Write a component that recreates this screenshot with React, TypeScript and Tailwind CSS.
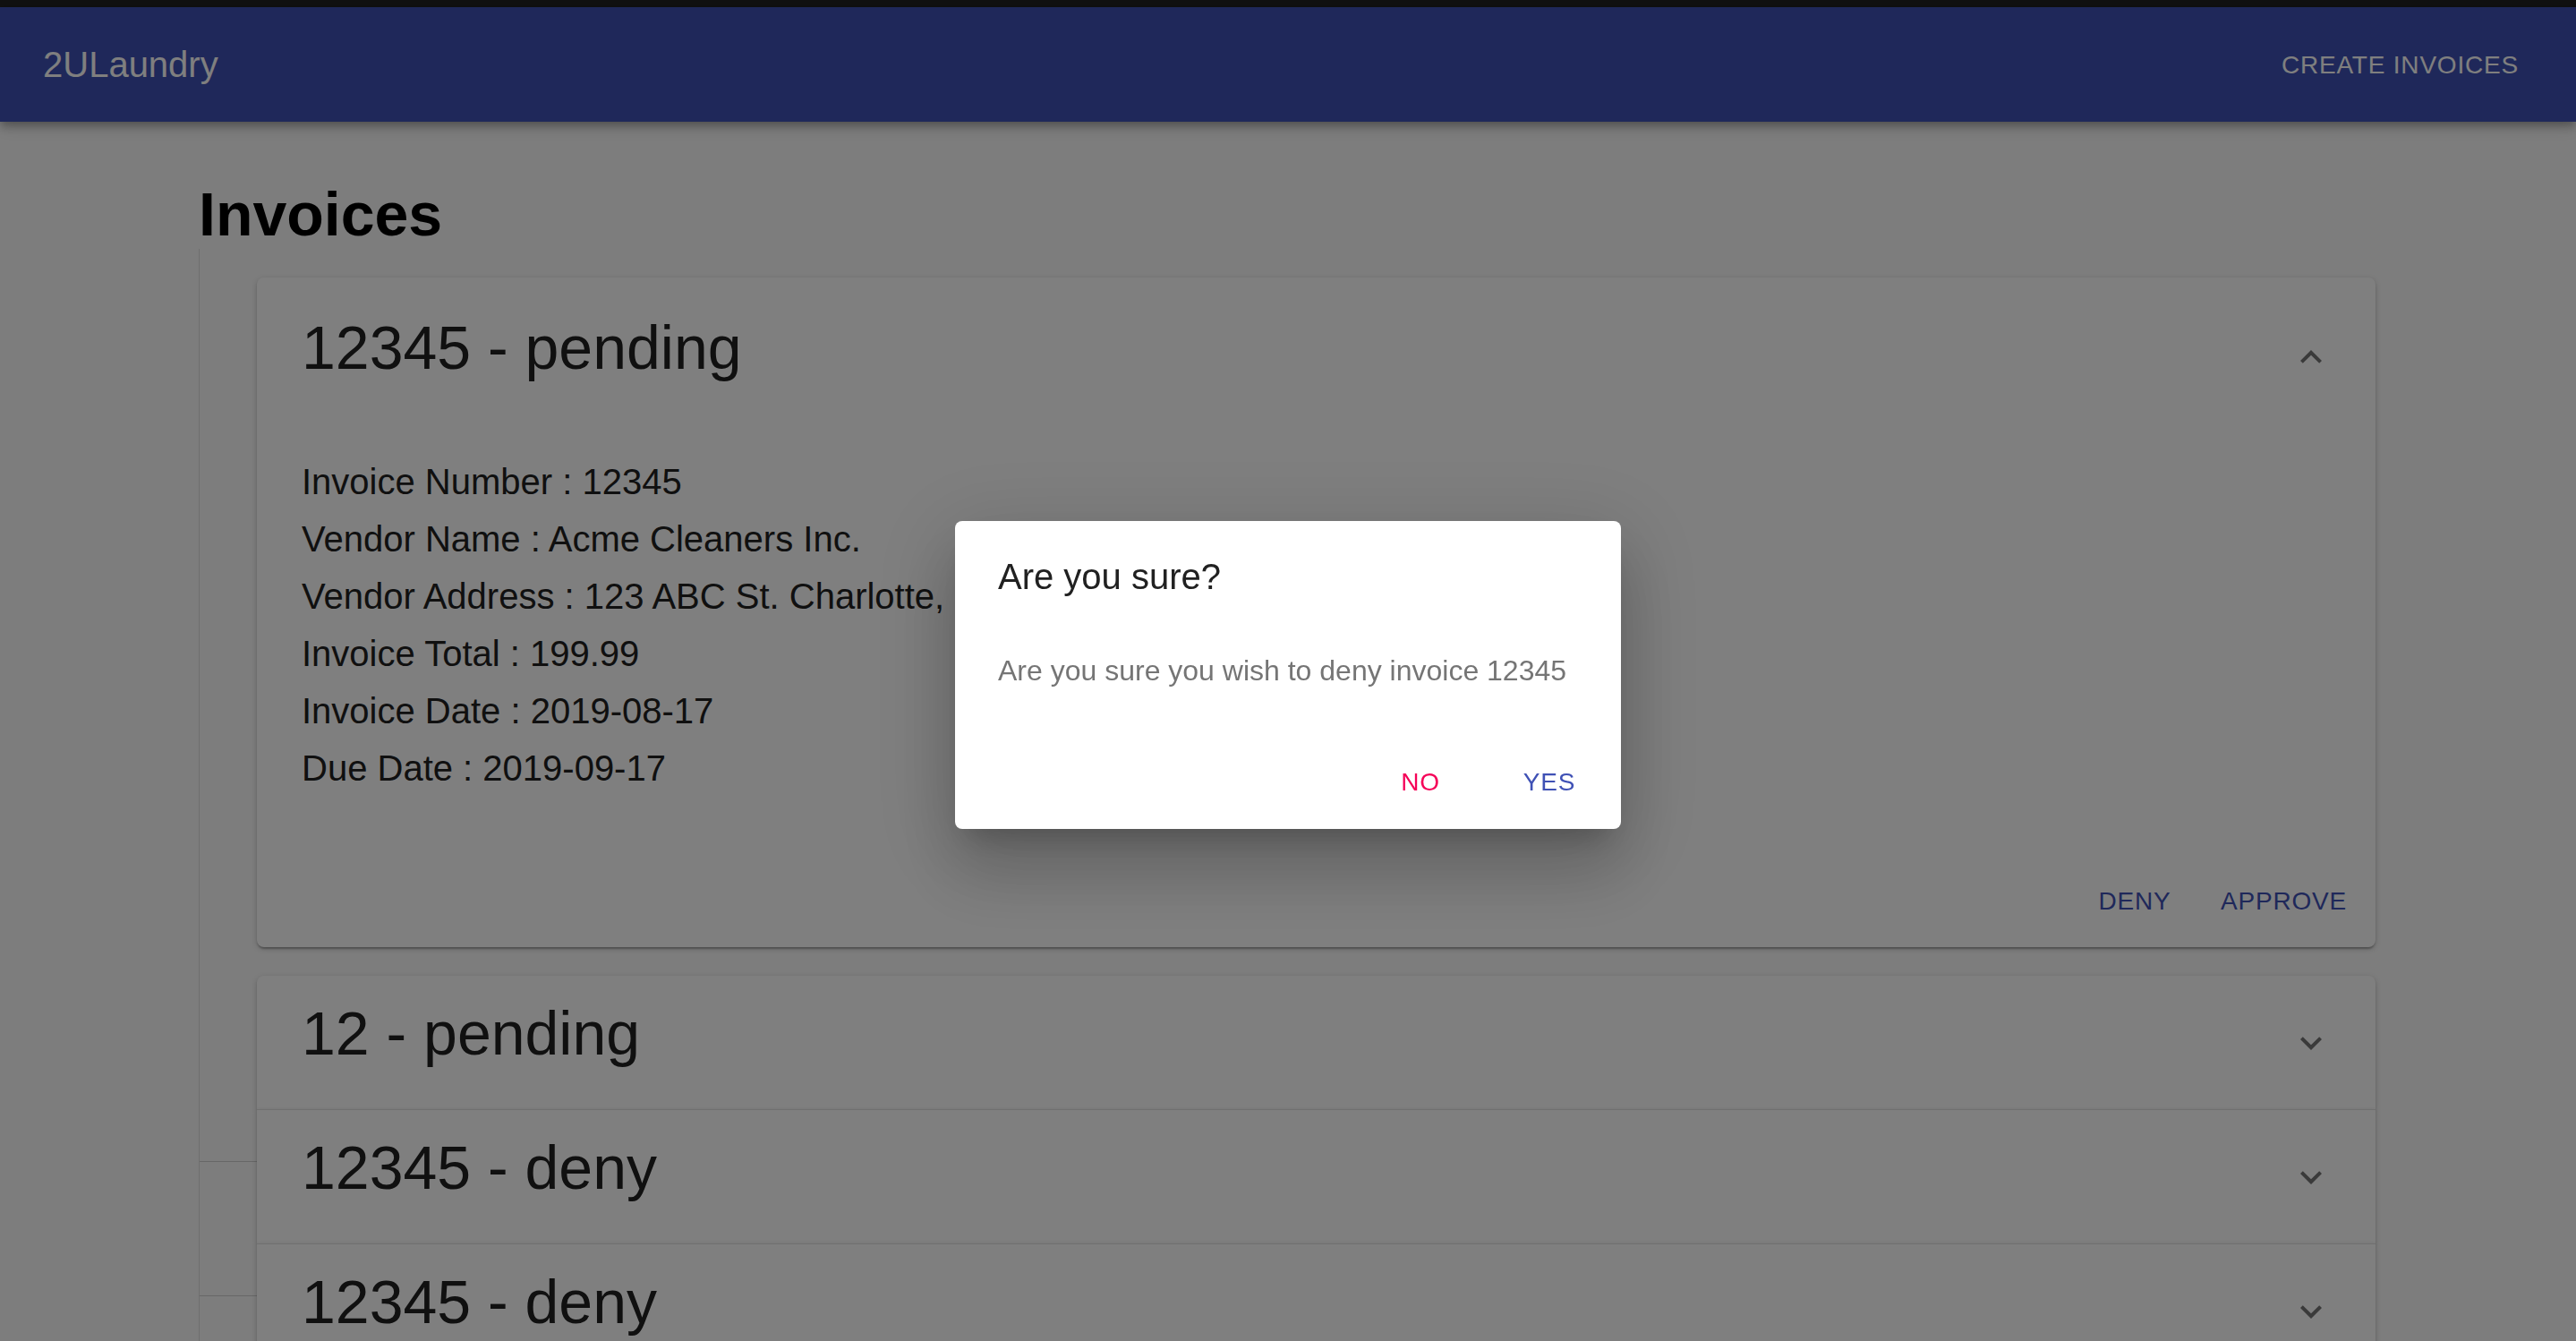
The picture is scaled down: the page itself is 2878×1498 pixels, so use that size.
import React from "react";

const cardShadow =
  "shadow-[0_2px_6px_0_rgba(0,0,0,0.2),0_2px_2px_0_rgba(0,0,0,0.14),0_4px_2px_-2px_rgba(0,0,0,0.12)]";

function Chevron({ up }: { up?: boolean }) {
  return (
    <div className="w-[96px] h-[96px] flex items-center justify-center shrink-0 self-center">
      <svg width="48" height="48" viewBox="0 0 24 24" fill="#757575">
        {up ? (
          <path d="M12 8l-6 6 1.41 1.41L12 10.83l4.59 4.58L18 14z" />
        ) : (
          <path d="M16.59 8.59L12 13.17 7.41 8.59 6 10l6 6 6-6z" />
        )}
      </svg>
    </div>
  );
}

function Row({ line, children }: { line?: boolean; children: React.ReactNode }) {
  return (
    <div className="flex">
      <div className="w-[64px] shrink-0">
        {line && <div className="mt-[58px] border-t border-[#cecece]" />}
      </div>
      <div className="flex-1 min-w-0">{children}</div>
    </div>
  );
}

function Summary({ title, up, top }: { title: string; up?: boolean; top: number }) {
  return (
    <div className={"flex items-start pl-[50px] pr-[24px] " + (top === 36 ? "h-[178px]" : "h-[149px]")}>
      <h4
        className={
          "flex-1 text-[68px] leading-[84px] text-[#212121] " + (top === 36 ? "pt-[36px]" : "pt-[22px]")
        }
      >
        {title}
      </h4>
      <Chevron up={up} />
    </div>
  );
}

const details = [
  "Invoice Number : 12345",
  "Vendor Name : Acme Cleaners Inc.",
  "Vendor Address : 123 ABC St. Charlotte, NC 28209",
  "Invoice Total : 199.99",
  "Invoice Date : 2019-08-17",
  "Due Date : 2019-09-17",
];

export default function App() {
  return (
    <div className="h-screen overflow-hidden bg-[#fafafa] font-['Liberation_Sans',Arial,sans-serif]">
      <div className="h-[8px] bg-[#222]" />
      {/* App bar */}
      <header className="relative z-10 h-[128px] bg-[#3f51b5] flex items-center justify-between pl-12 pr-[48px] shadow-[0_4px_8px_-2px_rgba(0,0,0,0.2),0_8px_10px_0_rgba(0,0,0,0.14),0_2px_20px_0_rgba(0,0,0,0.12)]">
        <h6 className="text-[40px] leading-[64px] font-medium text-white">2ULaundry</h6>
        <button className="h-[72px] px-4 text-[28px] leading-[49px] tracking-[0.8px] font-medium text-white uppercase">
          Create Invoices
        </button>
      </header>

      <main className="ml-[222px] mr-[224px]">
        <h1 className="pt-[69px] text-[68px] leading-[68px] font-bold text-black">Invoices</h1>
        <div className="mt-[5px] border-l border-[#dedede] pt-[32px]">
          {/* Expanded panel */}
          <Row>
            <div className={"bg-white rounded-[8px] " + cardShadow}>
              <Summary title="12345 - pending" up top={36} />
              <div className="pl-[50px] pt-[18px] pb-[64px]">
                {details.map((d) => (
                  <p key={d} className="text-[40px] leading-[64px] text-[#212121] font-medium">
                    {d}
                  </p>
                ))}
              </div>
              <div className="flex justify-end gap-4 p-4">
                <button className="h-[72px] min-w-[128px] px-4 text-[28px] leading-[49px] tracking-[0.8px] font-medium text-[#3f51b5]">
                  DENY
                </button>
                <button className="h-[72px] min-w-[128px] px-4 text-[28px] leading-[49px] tracking-[0.8px] font-medium text-[#3f51b5]">
                  APPROVE
                </button>
              </div>
            </div>
          </Row>

          {/* Collapsed panels */}
          <div className="mt-[32px]">
            <Row>
              <div className={"bg-white rounded-t-[8px] " + cardShadow}>
                <Summary title="12 - pending" top={22} />
              </div>
            </Row>
            <Row line>
              <div className={"bg-white border-t border-[#e0e0e0] " + cardShadow}>
                <Summary title="12345 - deny" top={22} />
              </div>
            </Row>
            <Row line>
              <div className={"bg-white border-t border-[#e0e0e0] rounded-b-[8px] " + cardShadow}>
                <Summary title="12345 - deny" top={22} />
              </div>
            </Row>
          </div>
        </div>
      </main>

      {/* Dialog */}
      <div className="fixed inset-0 z-20 bg-black/50 flex items-center justify-center pt-[10px]">
        <div className="w-[744px] bg-white rounded-[8px] shadow-[0_22px_30px_-14px_rgba(0,0,0,0.2),0_48px_76px_6px_rgba(0,0,0,0.14),0_18px_92px_16px_rgba(0,0,0,0.12)]">
          <div className="px-12 pt-[30px] pb-[32px]">
            <h2 className="text-[40px] leading-[64px] font-medium text-[#212121]">Are you sure?</h2>
          </div>
          <div className="px-12 pt-[17px] pb-[40px]">
            <p className="text-[32px] leading-[48px] text-[#757575]">
              Are you sure you wish to deny invoice 12345
            </p>
          </div>
          <div className="flex justify-end gap-4 px-4 pt-[24px] pb-[17px]">
            <button className="h-[72px] min-w-[128px] px-4 text-[28px] leading-[49px] tracking-[0.8px] font-medium text-[#f50057]">
              NO
            </button>
            <button className="h-[72px] min-w-[128px] px-4 text-[28px] leading-[49px] tracking-[0.8px] font-medium text-[#3f51b5]">
              YES
            </button>
          </div>
        </div>
      </div>
    </div>
  );
}
